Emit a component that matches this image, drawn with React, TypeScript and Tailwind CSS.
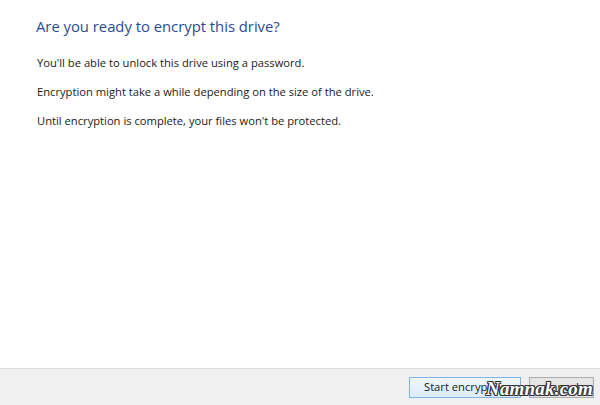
export default function App() {
  const font = { fontFamily: '"Open Sans", "Noto Sans", sans-serif' };
  return (
    <div className="w-[600px] h-[405px] bg-white flex flex-col overflow-hidden" style={font}>
      <div className="flex-1 pl-[36px] pt-[15px]">
        <h1 className="text-[14.8px] leading-[22px] text-[#2a4b94]">
          Are you ready to encrypt this drive?
        </h1>
        <div className="mt-[17px] flex flex-col gap-[11px] text-[11.2px] leading-[18px] text-[#1a1a1a] pl-px">
          <p>You'll be able to unlock this drive using a password.</p>
          <p>Encryption might take a while depending on the size of the drive.</p>
          <p>Until encryption is complete, your files won't be protected.</p>
        </div>
      </div>
      <div className="h-[37px] bg-[#f0f0f0] border-t border-[#dedede] flex items-center justify-end gap-[8px] pr-[6px] relative">
        <button className="w-[112px] h-[21px] border border-[#7fb2e5] bg-gradient-to-b from-[#eef6fd] to-[#dcecfc] text-[11.2px] text-[#1a1a1a] text-left pl-[14px]">
          Start encryption
        </button>
        <button className="w-[65px] h-[21px] border border-[#adadad] bg-[#e5e5e5] text-[11.2px] text-[#1a1a1a]">
          Cancel
        </button>
        <span
          className="absolute right-[7px] top-[6px] text-[19px] italic font-bold text-white tracking-[0.2px]"
          style={{
            fontFamily: '"Liberation Serif", serif',
            textShadow:
              "1px 0 #333, -1px 0 #333, 0 1px #333, 0 -1px #333, 1px 1px #333, -1px -1px #333, 1px -1px #333, -1px 1px #333",
          }}
        >
          Namnak.com
        </span>
      </div>
    </div>
  );
}
